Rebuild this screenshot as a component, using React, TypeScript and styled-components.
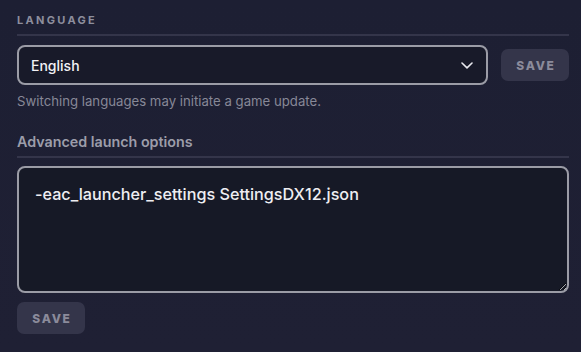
import React from "react";
import styled, { createGlobalStyle } from "styled-components";

const Global = createGlobalStyle`
  html, body { margin: 0; padding: 0; background: #1e1f33; }
  body { font-family: Inter, "Noto Sans", sans-serif; }
  * { box-sizing: border-box; }
`;

const Page = styled.div`
  width: 581px;
  height: 352px;
  background: linear-gradient(180deg, #1d1f33 0%, #1f2034 100%);
  padding: 12px 12px 0 17px;
  display: flex;
  flex-direction: column;
`;

const Section = styled.section`
  display: flex;
  flex-direction: column;
`;

const Heading = styled.h3<{ $caps?: boolean }>`
  margin: 0;
  font-size: ${(p) => (p.$caps ? "11px" : "14.3px")};
  font-weight: ${(p) => (p.$caps ? 700 : 600)};
  letter-spacing: ${(p) => (p.$caps ? "2.3px" : "0")};
  text-transform: ${(p) => (p.$caps ? "uppercase" : "none")};
  color: ${(p) => (p.$caps ? "#8d8e9d" : "#9c9daa")};
  line-height: 16px;
  padding-bottom: 6px;
  border-bottom: 2px solid #34354a;
`;

const Row = styled.div`
  display: flex;
  align-items: center;
  gap: 13px;
  margin-top: 9px;
`;

const SelectBox = styled.div`
  width: 471px;
  height: 40px;
  border: 2px solid #9b9ca6;
  border-radius: 8px;
  background: #181a29;
  display: flex;
  align-items: center;
  justify-content: space-between;
  padding: 0 13px 0 12px;
  color: #f2f2f5;
  font-size: 14px;
  font-weight: 500;
`;

const Button = styled.button`
  width: 68px;
  height: 32px;
  border: none;
  border-radius: 7px;
  background: #34354a;
  color: #8b8b9b;
  font-family: Inter, "Noto Sans", sans-serif;
  font-size: 12px;
  font-weight: 800;
  letter-spacing: 1.7px;
  padding: 0 0 0 2px;
  cursor: pointer;
`;

const Helper = styled.p`
  margin: 8px 0 0;
  font-size: 13.2px;
  color: #878897;
  line-height: 16px;
`;

const Spacer = styled.div<{ $h: number }>`
  height: ${(p) => p.$h}px;
`;

const TextArea = styled.textarea`
  margin-top: 8px;
  width: 552px;
  height: 127px;
  border: 2px solid #9b9ca6;
  border-radius: 8px;
  background: #161926;
  color: #eeeef2;
  font-family: Inter, "Noto Sans", sans-serif;
  font-size: 16.2px;
  font-weight: 500;
  padding: 16px 16px;
  resize: vertical;
  outline: none;
`;

const BottomButton = styled(Button)`
  margin-top: 9px;
`;

const Chevron = () => (
  <svg width="12" height="7" viewBox="0 0 12 7" fill="none">
    <path d="M1 1L6 5.8L11 1" stroke="#e8e8ee" strokeWidth="1.6" strokeLinecap="round" strokeLinejoin="round" />
  </svg>
);

export default function App() {
  return (
    <>
      <Global />
      <Page>
        <Section>
          <Heading $caps>Language</Heading>
          <Row>
            <SelectBox>
              <span>English</span>
              <Chevron />
            </SelectBox>
            <Button>SAVE</Button>
          </Row>
          <Helper>Switching languages may initiate a game update.</Helper>
        </Section>
        <Spacer $h={25} />
        <Section>
          <Heading>Advanced launch options</Heading>
          <TextArea defaultValue="-eac_launcher_settings SettingsDX12.json" spellCheck={false} />
          <div>
            <BottomButton>SAVE</BottomButton>
          </div>
        </Section>
      </Page>
    </>
  );
}
